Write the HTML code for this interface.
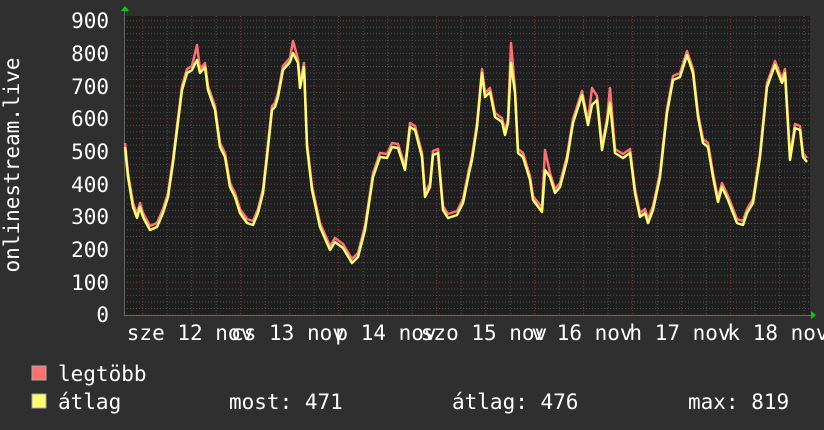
<!DOCTYPE html>
<html><head><meta charset="utf-8"><style>
html,body{margin:0;padding:0;background:#2f2f2f;width:824px;height:430px;overflow:hidden}
svg{position:absolute;left:0;top:0}
text{font-family:"DejaVu Sans Mono","Liberation Mono",monospace;fill:#fff;font-size:21px}
</style></head><body>
<svg width="824" height="430" viewBox="0 0 824 430">
<rect x="124" y="16" width="686" height="300" fill="#1f1f1f"/>
<g id="grid"></g>
<g stroke-linejoin="round" fill="none">
<polyline id="red" stroke="#ff7070" stroke-width="2.5"/>
<polyline id="yel" stroke="#ffff70" stroke-width="2.5"/>
</g>
<path d="M121 11 L125 6 L129 11 Z" fill="#00d000"/>
<path d="M811 311 L816 315 L811 319 Z" fill="#00d000"/>
<g text-anchor="end">
<text x="109" y="28">900</text><text x="109" y="61">800</text><text x="109" y="94">700</text>
<text x="109" y="126">600</text><text x="109" y="159">500</text><text x="109" y="192">400</text>
<text x="109" y="224">300</text><text x="109" y="257">200</text><text x="109" y="290">100</text>
<text x="109" y="322">0</text>
</g>
<text transform="translate(19,165) rotate(-90)" text-anchor="middle">onlinestream.live</text>
<g text-anchor="middle">
<text x="190" y="340">sze 12 nov</text>
<text x="288" y="340">cs 13 nov</text>
<text x="386" y="340">p 14 nov</text>
<text x="484" y="340">szo 15 nov</text>
<text x="582" y="340">v 16 nov</text>
<text x="680" y="340">h 17 nov</text>
<text x="778" y="340">k 18 nov</text>
</g>
<rect x="32" y="366" width="14" height="14" fill="#ff7070" stroke="#aaa" stroke-width="1"/>
<rect x="32" y="394" width="14" height="14" fill="#ffff70" stroke="#aaa" stroke-width="1"/>
<text x="58" y="381">legtöbb</text>
<text x="58" y="409">átlag</text>
<text x="229" y="409">most: 471</text>
<text x="452" y="409">átlag: 476</text>
<text x="688" y="409">max: 819</text>
</svg>
<script>
var g=document.getElementById('grid'),s='';
for(var v=0;v<=900;v+=20){var y=315-0.327*v;var maj=v%100==0;
s+='<line x1="124" x2="810" y1="'+y+'" y2="'+y+'" stroke="'+(maj?'#7a3a3a':'#505050')+'" stroke-width="1" stroke-dasharray="1,2"/>';}
for(var i=-1;i<29;i++){var x=142.7+24.5*i;if(x<124||x>810)continue;var maj=(i%4==0);
s+='<line y1="16" y2="316" x1="'+x+'" x2="'+x+'" stroke="'+(maj?'#7a3a3a':'#505050')+'" stroke-width="1" stroke-dasharray="1,2"/>';}
s+='<line x1="124" x2="812" y1="315.5" y2="315.5" stroke="#666"/><line x1="124.5" x2="124.5" y1="10" y2="316" stroke="#666"/>';
g.innerHTML=s;
var p=[[125,147],[128,177],[133,207],[137,218],[140,207],[143,217],[150,230],[157,227],[163,213],[168,197],[173,163],[177,130],[182,90],[187,73],[192,70],[197,60],[200,73],[205,67],[208,90],[215,110],[220,147],[225,157],[230,187],[235,197],[240,213],[247,223],[253,225],[258,213],[263,193],[267,157],[272,110],[275,107],[278,97],[283,70],[290,62],[293,53],[298,63],[300,88],[304,67],[307,147],[312,190],[320,227],[330,250],[335,242],[343,248],[352,263],[358,257],[365,230],[373,177],[380,157],[387,158],[392,147],[398,148],[405,170],[410,127],[415,130],[422,157],[425,197],[430,187],[433,155],[438,153],[443,210],[448,218],[457,215],[463,203],[469,173],[472,160],[477,127],[482,73],[485,97],[490,92],[495,117],[502,122],[505,135],[508,123],[511,63],[515,93],[518,153],[523,157],[530,180],[533,200],[542,212],[545,170],[550,177],[555,193],[560,187],[567,160],[573,123],[582,95],[588,125],[592,105],[597,100],[602,150],[607,123],[610,103],[615,153],[623,158],[630,153],[635,193],[640,217],[645,213],[648,223],[653,210],[660,177],[667,113],[673,80],[680,77],[687,55],[693,73],[698,117],[703,143],[708,147],[713,177],[718,202],[722,187],[728,200],[737,223],[743,225],[747,213],[753,203],[760,157],[767,87],[775,65],[782,83],[785,73],[790,160],[795,128],[800,130],[803,157],[807,162]];
var spikes={197:45,293:41,511:43,592:88,610:88,545:150};
document.getElementById('yel').setAttribute('points',p.map(function(a){return a.join(',')}).join(' '));
document.getElementById('red').setAttribute('points',p.map(function(a){var y=spikes[a[0]]!==undefined?spikes[a[0]]:a[1]-4;return a[0]+','+y}).join(' '));
</script>
</body></html>
